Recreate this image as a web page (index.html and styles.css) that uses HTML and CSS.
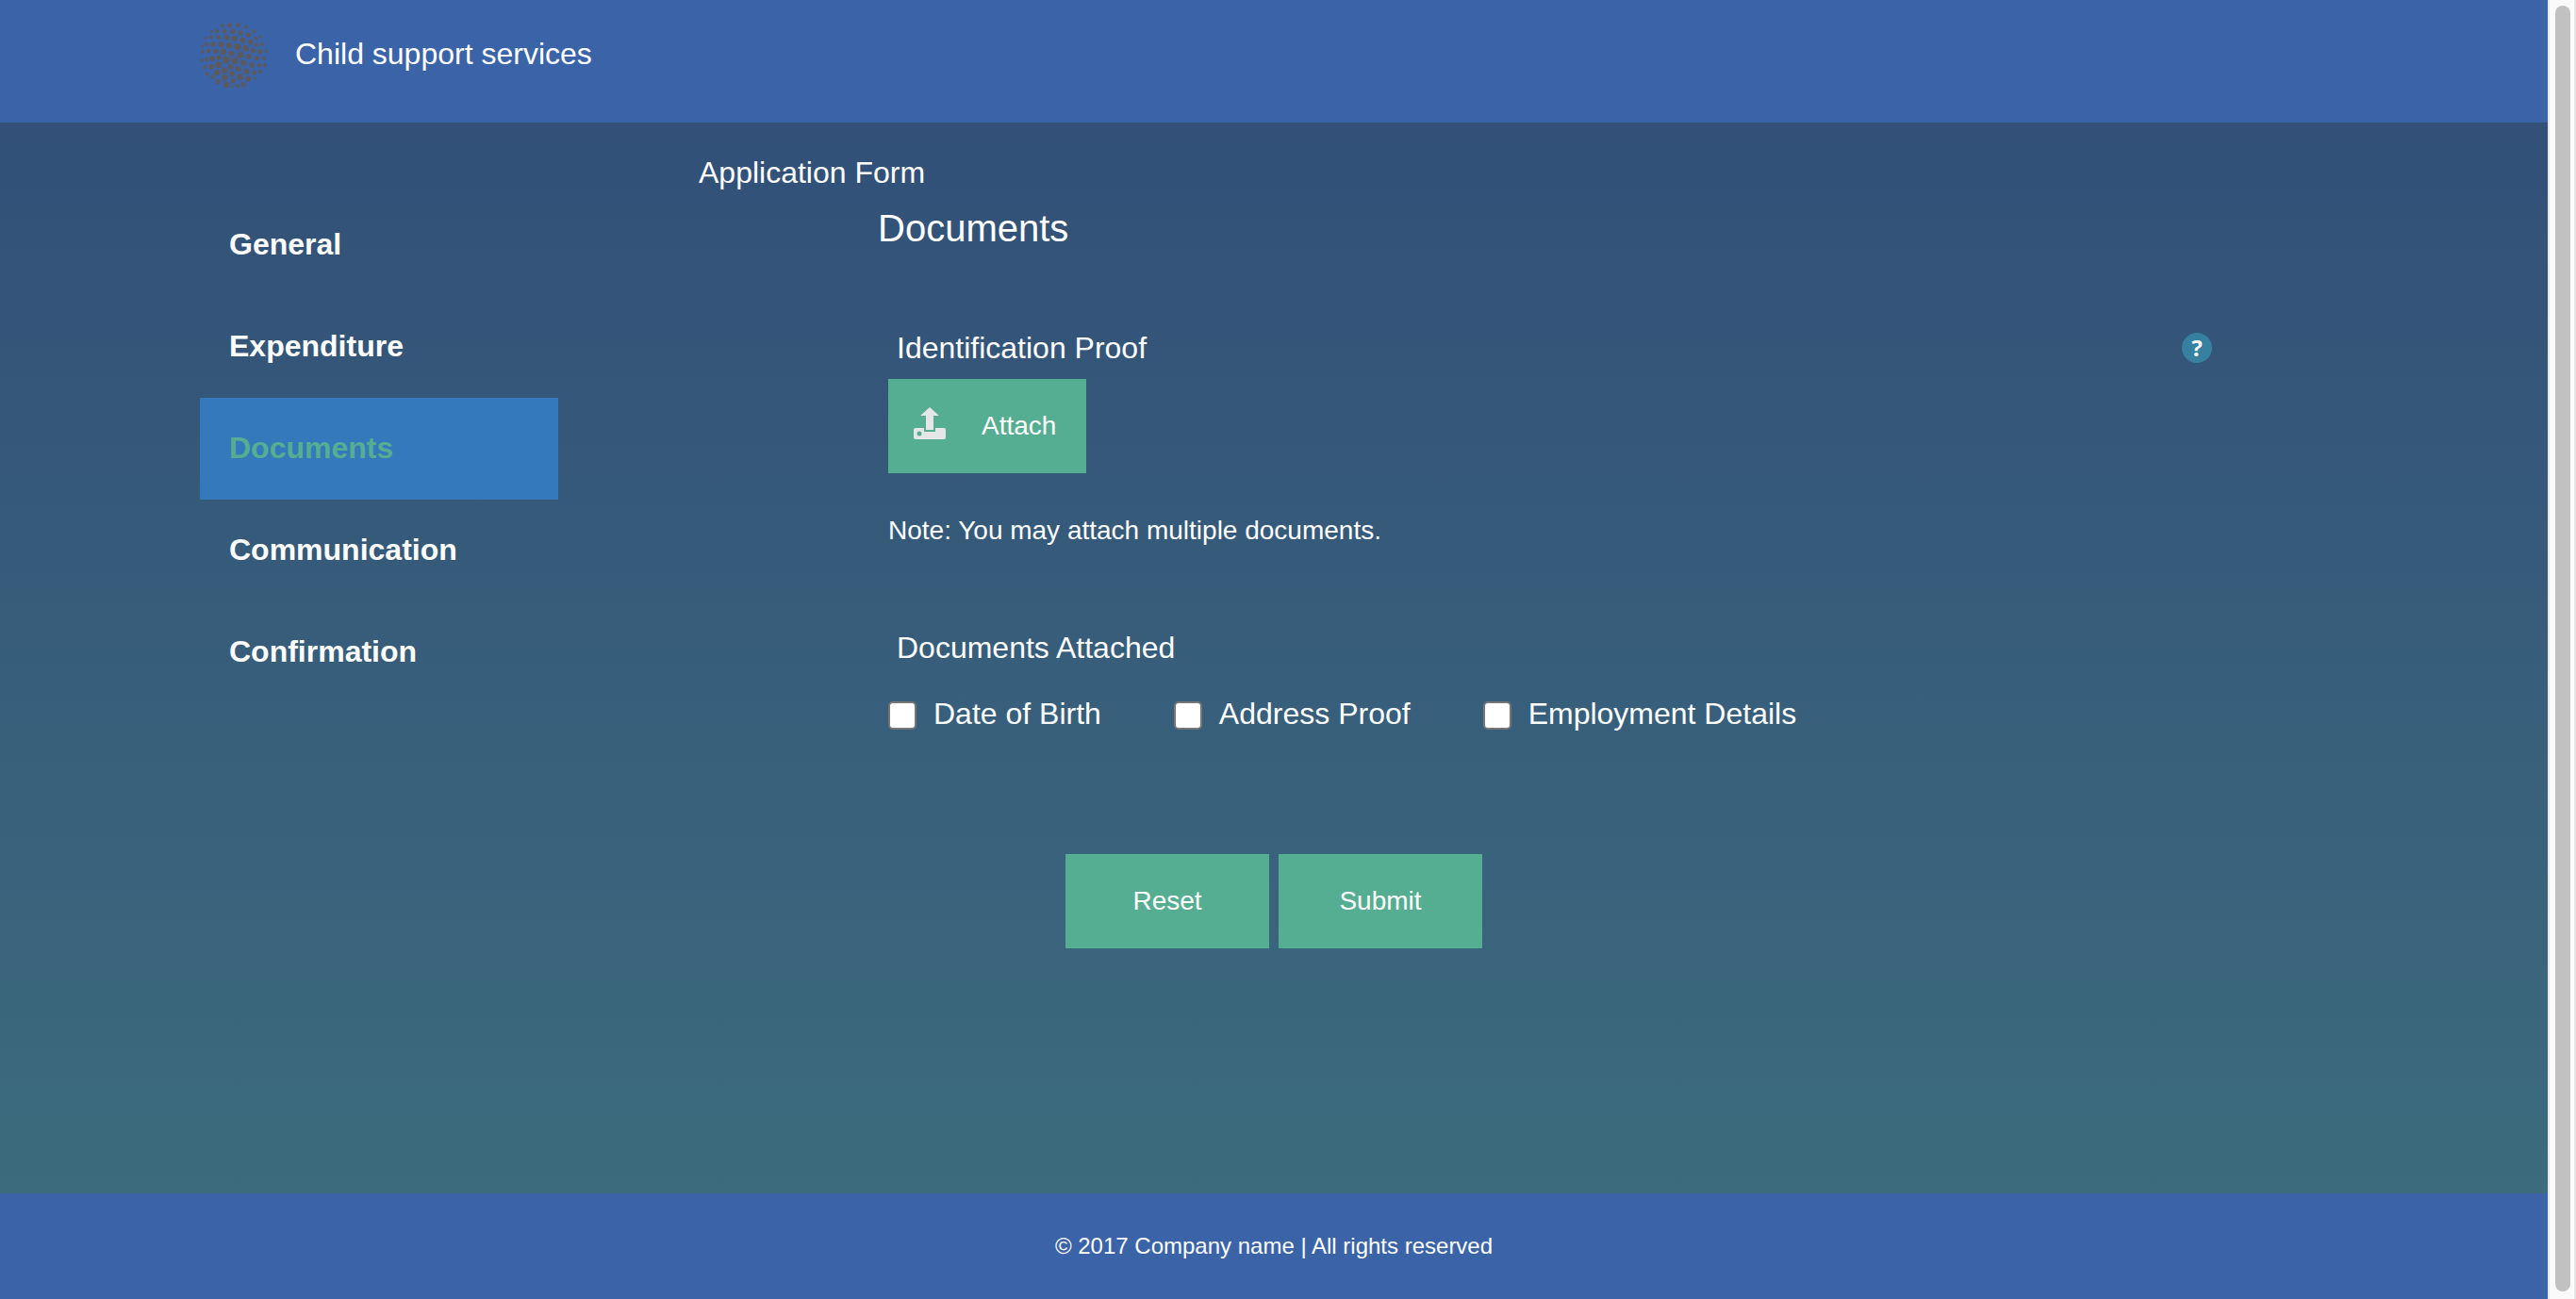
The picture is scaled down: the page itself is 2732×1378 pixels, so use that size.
FILE: index.html
```html
<!DOCTYPE html>
<html lang="en">
<head>
<meta charset="utf-8">
<title>Child support services</title>
<link rel="stylesheet" href="styles.css">
</head>
<body>
<div class="page">
  <header class="header">
    <svg class="logo" viewBox="36 36 216 216" fill="#5a5a5f" aria-hidden="true">
      <circle cx="108" cy="52" r="5.5"/><circle cx="131" cy="50" r="7.5"/><circle cx="158" cy="50" r="7"/><circle cx="183" cy="56" r="5.5"/>
      <circle cx="73" cy="70" r="5"/><circle cx="90" cy="69" r="6.5"/><circle cx="114" cy="70" r="7"/><circle cx="140" cy="70" r="8"/><circle cx="165" cy="75" r="8"/><circle cx="190" cy="81" r="8"/><circle cx="208" cy="69" r="6"/>
      <circle cx="55" cy="91" r="5"/><circle cx="73" cy="88" r="6"/><circle cx="95" cy="89" r="7"/><circle cx="121" cy="90" r="9"/><circle cx="146" cy="93" r="9.5"/><circle cx="172" cy="98" r="9"/><circle cx="197" cy="104" r="8.5"/><circle cx="214" cy="92" r="6"/><circle cx="229" cy="87" r="4.5"/>
      <circle cx="43" cy="117" r="4"/><circle cx="57" cy="110" r="6"/><circle cx="77" cy="111" r="8"/><circle cx="103" cy="112" r="9"/><circle cx="129" cy="115" r="10"/><circle cx="156" cy="119" r="11"/><circle cx="182" cy="124" r="10"/><circle cx="205" cy="131" r="8"/><circle cx="216" cy="113" r="6.5"/><circle cx="235" cy="110" r="6"/>
      <circle cx="45" cy="134" r="5.5"/><circle cx="64" cy="132" r="7"/><circle cx="87" cy="133" r="8"/><circle cx="111" cy="135" r="9.5"/><circle cx="137" cy="140" r="9"/><circle cx="165" cy="145" r="10.5"/><circle cx="192" cy="150" r="9"/><circle cx="228" cy="134" r="8"/><circle cx="247" cy="133" r="4.5"/>
      <circle cx="42" cy="162" r="5.5"/><circle cx="58" cy="159" r="6.5"/><circle cx="76" cy="157" r="9"/><circle cx="97" cy="153" r="8"/><circle cx="120" cy="161" r="11.5"/><circle cx="148" cy="163" r="11"/><circle cx="175" cy="170" r="9.5"/><circle cx="217" cy="155" r="8"/><circle cx="239" cy="156" r="6"/>
      <circle cx="53" cy="183" r="6"/><circle cx="73" cy="182" r="8.5"/><circle cx="96" cy="176" r="10.5"/><circle cx="134" cy="182" r="8.5"/><circle cx="158" cy="189" r="9"/><circle cx="184" cy="197" r="9.5"/><circle cx="202" cy="177" r="8.5"/><circle cx="225" cy="178" r="7"/><circle cx="242" cy="178" r="6"/>
      <circle cx="59" cy="205" r="5.5"/><circle cx="76" cy="214" r="7"/><circle cx="91" cy="201" r="9.5"/><circle cx="115" cy="194" r="9.5"/><circle cx="138" cy="205" r="9"/><circle cx="164" cy="215" r="10.5"/><circle cx="190" cy="221" r="9"/><circle cx="209" cy="202" r="7.5"/><circle cx="229" cy="199" r="6"/><circle cx="211" cy="220" r="4"/>
      <circle cx="93" cy="230" r="8"/><circle cx="115" cy="217" r="10"/><circle cx="142" cy="228" r="8"/><circle cx="121" cy="240" r="9.5"/><circle cx="139" cy="246" r="4"/><circle cx="156" cy="244" r="6"/><circle cx="174" cy="239" r="8"/>
    </svg>
    <span class="brand">Child support services</span>
  </header>

  <div class="content">
    <div class="columns">
      <nav class="sidebar">
        <a class="step" href="#general">General</a>
        <a class="step" href="#expenditure">Expenditure</a>
        <a class="step active" href="#documents" aria-current="step">Documents</a>
        <a class="step" href="#communication">Communication</a>
        <a class="step" href="#confirmation">Confirmation</a>
      </nav>
      <main class="main">
        <h1 class="title">Application Form</h1>
        <h2 class="section-title">Documents</h2>
        <form class="form" id="documents-form">
          <div class="row">
            <h3 class="label">Identification Proof</h3>
            <button class="help" type="button" aria-label="Help">?</button>
          </div>
          <button class="btn attach" type="button">
            <svg class="upload" viewBox="0 0 34 34" fill="#e6e6e6" aria-hidden="true">
              <path d="M17 0L27 9H21V24H13V9H7Z"/>
              <path fill-rule="evenodd" d="M2 22H11V26H23V22H32Q34 22 34 24V32Q34 34 32 34H2Q0 34 0 32V24Q0 22 2 22ZM6 25.500A2.500 2.500 0 1 0 6 30.500A2.500 2.500 0 1 0 6 25.500Z"/>
            </svg>
            Attach
          </button>
          <p class="note">Note: You may attach multiple documents.</p>
          <h3 class="label">Documents Attached</h3>
          <div class="checks">
            <label class="check"><input class="box" type="checkbox">Date of Birth</label>
            <label class="check"><input class="box" type="checkbox">Address Proof</label>
            <label class="check"><input class="box" type="checkbox">Employment Details</label>
          </div>
        </form>
      </main>
    </div>
    <div class="actions">
      <button class="btn action" type="reset" form="documents-form">Reset</button>
      <button class="btn action" type="submit" form="documents-form">Submit</button>
    </div>
  </div>

  <footer class="footer">© 2017 Company name | All rights reserved</footer>
</div>
<div class="scrollbar" aria-hidden="true"><div class="thumb"></div></div>
</body>
</html>
```
FILE: styles.css
```css
* {
  box-sizing: border-box;
}

body {
  margin: 0;
  display: flex;
  min-height: 100vh;
  font-family: "Liberation Sans", Arial, sans-serif;
  font-size: 32px;
  line-height: 44px;
  color: #fff;
}

h1, h2, h3, p {
  margin: 0;
  font-weight: normal;
}

.page {
  flex: 1;
  display: flex;
  flex-direction: column;
}

.header {
  display: flex;
  align-items: center;
  gap: 29px;
  padding: 22px 212px 36px;
  background: #3b63a8;
}

.logo {
  width: 72px;
  height: 72px;
}

.brand {
  padding-bottom: 2px;
}

.content {
  flex: 1;
  padding: 32px 212px;
  background: linear-gradient(#325078, #3c6b7d);
}

.columns {
  display: flex;
}

.sidebar {
  width: 380px;
  padding-top: 44px;
}

.step {
  display: block;
  padding: 31px 31px 33px;
  font-weight: bold;
  color: #fff;
  text-decoration: none;
}

.step.active {
  background: #3479bc;
  color: #55ae91;
}

.main {
  flex: 1;
  padding: 0 144px 0 149px;
}

.title {
  font-size: 32px;
  line-height: 42px;
}

.section-title {
  margin: 10px 0 77px 190px;
  font-size: 40px;
  line-height: 56px;
}

.form {
  padding-left: 201px;
}

.row {
  display: flex;
  justify-content: space-between;
  align-items: center;
  margin-bottom: 11px;
}

.label {
  padding-left: 9px;
  font-size: 32px;
}

.help {
  width: 32px;
  height: 32px;
  padding: 0;
  border: 0;
  border-radius: 50%;
  background: #3780a0;
  color: #fff;
  font: bold 24px/32px "Noto Sans", sans-serif;
}

.btn {
  height: 100px;
  border: 0;
  background: #55ae91;
  color: #fff;
  font-family: inherit;
  font-size: 28px;
}

.attach {
  display: flex;
  align-items: center;
  gap: 38px;
  width: 210px;
  padding: 0 27px;
}

.upload {
  width: 34px;
  height: 34px;
  margin-bottom: 6px;
}

.note {
  margin: 41px 0 82px;
  font-size: 28px;
  line-height: 40px;
}

.checks {
  display: flex;
  gap: 77px;
  margin-top: 26px;
}

.check {
  display: flex;
  align-items: center;
  gap: 18px;
}

.box {
  appearance: none;
  width: 30px;
  height: 30px;
  margin: 4px 0 0;
  border: 2px solid #767676;
  border-radius: 5px;
  background: #fff;
}

.actions {
  display: flex;
  justify-content: center;
  gap: 10px;
  margin-top: 127px;
}

.action {
  width: 216px;
}

.footer {
  padding: 36px 0;
  background: #3b63a8;
  font-size: 24px;
  line-height: 40px;
  text-align: center;
}

.scrollbar {
  display: flex;
  width: 30px;
  padding: 6px 4px 8px 6px;
  border: solid #e8e8e8;
  border-width: 0 2px;
  background: #fafafa;
}

.thumb {
  width: 16px;
  border-radius: 8px;
  background: #c1c1c1;
}
```
